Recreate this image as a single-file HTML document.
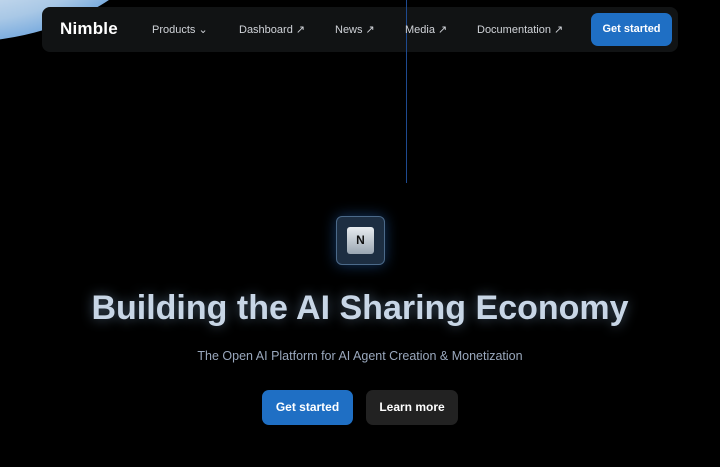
<!DOCTYPE html>
<html><head><style>
*{margin:0;padding:0;box-sizing:border-box}
body{width:720px;height:467px;background:#000;overflow:hidden;position:relative;font-family:"Liberation Sans",sans-serif;color:#fff}
.blob{position:absolute;left:-262px;top:-283px;width:444px;height:325px;border-radius:50%;background:radial-gradient(ellipse at 50% 50%,#dfe9f3 40%,#a9c8e6 62%,#4f92d8 80%,#1f6fc4 100%)}
.nav{position:absolute;left:42px;top:7px;width:636px;height:45px;background:#111314;border-radius:8px}
.logo{position:absolute;left:60px;top:19px;font-size:17px;font-weight:bold;letter-spacing:.2px}
.item{position:absolute;top:23px;font-size:11px;color:#d0d3d8}
.btn{position:absolute;left:591px;top:13px;width:81px;height:33px;background:#1f6fc4;border-radius:7px;font-size:11px;text-align:center;line-height:33px;font-weight:bold}
.line{position:absolute;left:406px;top:0;width:1px;height:183px;background:#1e4a90}
.icon{position:absolute;left:336px;top:216px;width:49px;height:49px;border-radius:6px;border:1px solid #4c6a8a;background:#1d2e42;box-shadow:0 0 14px rgba(40,110,200,.5)}
.icon div{position:absolute;left:10px;top:10px;width:27px;height:27px;border-radius:3px;background:linear-gradient(#e8ecf0,#9aa6b2);color:#111;font-weight:bold;font-size:12px;text-align:center;line-height:27px}
h1{position:absolute;left:0;width:720px;top:289px;text-align:center;font-size:34px;font-weight:bold;color:#c8d6e6;text-shadow:0 0 12px rgba(150,190,230,.45)}
.sub{position:absolute;left:0;width:720px;top:349px;text-align:center;font-size:12.5px;color:#9aa8bd}
.b{position:absolute;top:390px;height:35px;border-radius:7px;font-size:12px;text-align:center;line-height:35px;font-weight:bold}
</style></head><body>
<div class="blob"></div>
<div class="nav"></div>
<div class="line"></div>
<div class="logo">Nimble</div>
<div class="item" style="left:152px">Products ⌄</div>
<div class="item" style="left:239px">Dashboard ↗</div>
<div class="item" style="left:335px">News ↗</div>
<div class="item" style="left:405px">Media ↗</div>
<div class="item" style="left:477px">Documentation ↗</div>
<div class="btn">Get started</div>
<div class="icon"><div>N</div></div>
<h1>Building the AI Sharing Economy</h1>
<div class="sub">The Open AI Platform for AI Agent Creation &amp; Monetization</div>
<div class="b" style="left:262px;width:91px;background:#1f6fc4">Get started</div>
<div class="b" style="left:366px;width:92px;background:#222">Learn more</div>
</body></html>
